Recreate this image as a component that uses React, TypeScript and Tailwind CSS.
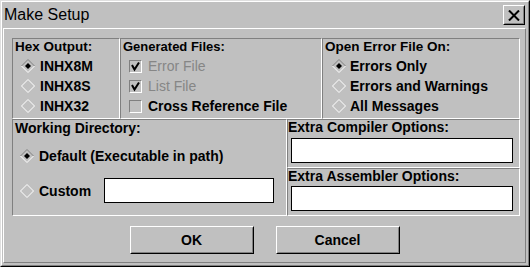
import React from "react";

const Diamond = ({ checked }: { checked?: boolean }) => (
  <svg width="14" height="14" viewBox="0 0 14 14" className="shrink-0">
    {checked ? (
      <>
        <polyline points="0.5,7 7,0.5 13.5,7" fill="none" stroke="#808080" strokeWidth="1" />
        <polyline points="13.5,7 7,13.5 0.5,7" fill="none" stroke="#ffffff" strokeWidth="1" />
        <polygon points="7,4 10,7 7,10 4,7" fill="#000000" />
      </>
    ) : (
      <polygon points="7,0.5 13.5,7 7,13.5 0.5,7" fill="none" stroke="#ffffff" strokeWidth="1" />
    )}
  </svg>
);

const Check = ({ checked }: { checked?: boolean }) => (
  <div className="w-[13px] h-[13px] shrink-0 border border-t-[#808080] border-l-[#808080] border-b-white border-r-white bg-[#c0c0c0] relative">
    {checked && (
      <svg width="11" height="11" viewBox="0 0 11 11" className="absolute left-0 top-0">
        <polyline points="2,4 4.5,8.5 9,1.5" fill="none" stroke="#000" strokeWidth="2" />
      </svg>
    )}
  </div>
);

const cell =
  "border border-t-[#808080] border-l-[#808080] border-b-white border-r-white box-border";

const Button = ({ label }: { label: string }) => (
  <div className="w-[124px] h-[28px] border border-t-white border-l-white border-b-black border-r-black box-border">
    <div className="w-full h-full border border-t-[#c0c0c0] border-l-[#c0c0c0] border-b-[#808080] border-r-[#808080] box-border flex items-center justify-center text-[14px] font-bold leading-none">
      {label}
    </div>
  </div>
);

export default function App() {
  return (
    <div className="w-[530px] h-[267px] bg-[#c0c0c0] text-black font-['Liberation_Sans',Arial,sans-serif]">
      <div className="w-[530px] h-[267px] border border-t-[#dfdfdf] border-l-[#dfdfdf] border-b-black border-r-black box-border">
        <div className="w-full h-full border border-t-white border-l-white border-b-[#808080] border-r-[#808080] box-border flex flex-col">
          {/* title row */}
          <div className="h-[26px] flex items-center justify-between">
            <div className="pl-[2px] text-[16px] leading-[26px]">Make Setup</div>
            <div className="mr-[3px] w-[22px] h-[20px] border border-t-white border-l-white border-b-black border-r-black box-border">
              <div className="w-full h-full border border-t-[#c0c0c0] border-l-[#c0c0c0] border-b-[#808080] border-r-[#808080] box-border flex items-center justify-center">
                <svg width="12" height="11" viewBox="0 0 12 11">
                  <line x1="1" y1="0.5" x2="11" y2="10.5" stroke="#000" strokeWidth="2" />
                  <line x1="11" y1="0.5" x2="1" y2="10.5" stroke="#000" strokeWidth="2" />
                </svg>
              </div>
            </div>
          </div>
          {/* inner panel */}
          <div className="ml-[1px] w-[523px] h-[235px] border border-t-white border-l-white border-b-[#808080] border-r-[#808080] box-border flex flex-col">
            <div className="pl-[8px] pt-[9px]">
              <div className="w-[508px] flex flex-col">
                {/* row 1 */}
                <div className="h-[81px] flex">
                  <div className={`${cell} w-[108px] h-full`}>
                    <div className="pl-[2px] text-[13.5px] font-bold leading-[16px] mb-[1px]">Hex Output:</div>
                    {[
                      ["INHX8M", true],
                      ["INHX8S", false],
                      ["INHX32", false],
                    ].map(([l, c]) => (
                      <div key={l as string} className="h-[20px] flex items-center ml-[8px] gap-[5px] text-[14px] font-bold">
                        <Diamond checked={c as boolean} />
                        <span className="leading-[20px]">{l as string}</span>
                      </div>
                    ))}
                  </div>
                  <div className={`${cell} w-[202px] h-full`}>
                    <div className="pl-[2px] text-[13px] font-bold leading-[16px] mb-[1px]">Generated Files:</div>
                    {[
                      ["Error File", true, true],
                      ["List File", true, true],
                      ["Cross Reference File", false, false],
                    ].map(([l, c, d]) => (
                      <div key={l as string} className="h-[20px] flex items-center ml-[8px] gap-[6px] text-[14px] font-bold">
                        <Check checked={c as boolean} />
                        <span className={`leading-[20px] ${d ? "text-[#868686] font-normal" : ""}`}>{l as string}</span>
                      </div>
                    ))}
                  </div>
                  <div className={`${cell} w-[198px] h-full`}>
                    <div className="pl-[2px] text-[13.5px] font-bold leading-[16px] mb-[1px]">Open Error File On:</div>
                    {[
                      ["Errors Only", true],
                      ["Errors and Warnings", false],
                      ["All Messages", false],
                    ].map(([l, c]) => (
                      <div key={l as string} className="h-[20px] flex items-center ml-[9px] gap-[4px] text-[14px] font-bold">
                        <Diamond checked={c as boolean} />
                        <span className="leading-[20px]">{l as string}</span>
                      </div>
                    ))}
                  </div>
                </div>
                {/* row 2 */}
                <div className="h-[97px] flex">
                  <div className={`${cell} w-[275px] h-full`}>
                    <div className="pl-[2px] text-[14px] font-bold leading-[16px]">Working Directory:</div>
                    <div className="mt-[10px] h-[20px] flex items-center ml-[7px] gap-[5px] text-[14px] font-bold">
                      <Diamond checked />
                      <span className="leading-[20px]">Default (Executable in path)</span>
                    </div>
                    <div className="mt-[12px] h-[25px] flex items-center ml-[7px] text-[14px] font-bold">
                      <Diamond />
                      <span className="ml-[5px] w-[65px] leading-[20px]">Custom</span>
                      <div className="w-[170px] h-[25px] bg-white border border-black box-border" />
                    </div>
                  </div>
                  <div className="w-[233px] h-full flex flex-col">
                    <div className={`${cell} h-[49px]`}>
                      <div className="text-[14px] font-bold leading-[15px]">Extra Compiler Options:</div>
                      <div className="mt-[3px] ml-[3px] w-[222px] h-[25px] bg-white border border-black box-border" />
                    </div>
                    <div className={`${cell} h-[48px]`}>
                      <div className="text-[14px] font-bold leading-[14px]">Extra Assembler Options:</div>
                      <div className="mt-[3px] ml-[3px] w-[222px] h-[25px] bg-white border border-black box-border" />
                    </div>
                  </div>
                </div>
              </div>
            </div>
            <div className="mt-[10px] flex justify-center gap-[22px]">
              <Button label="OK" />
              <Button label="Cancel" />
            </div>
          </div>
        </div>
      </div>
    </div>
  );
}
